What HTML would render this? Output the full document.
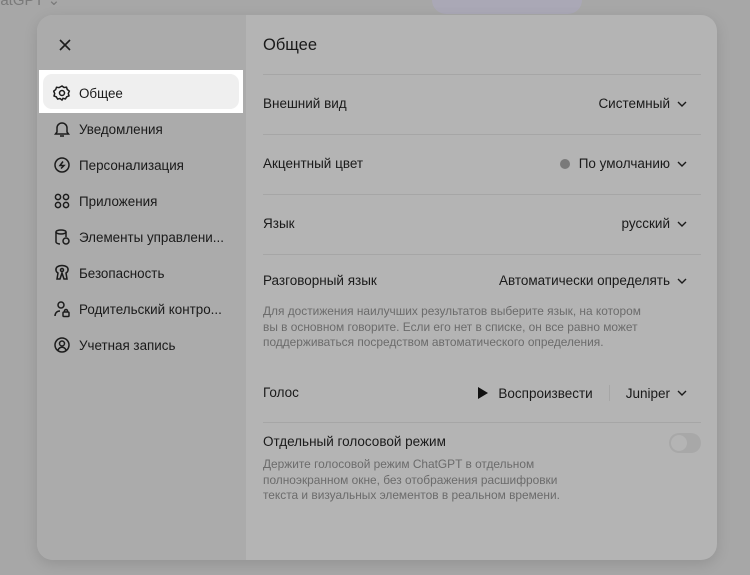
<!DOCTYPE html>
<html><head><meta charset="utf-8"><style>
*{margin:0;padding:0;box-sizing:border-box}
body{width:750px;height:575px;overflow:hidden;background:#a7a7a7;font-family:"Liberation Sans","Noto Sans CJK SC",sans-serif;color:#1a1a1a;position:relative}
.top{position:absolute;left:-8px;top:-9px;font-size:15px;color:#7a7a7a}
.plus{position:absolute;left:432px;top:-14px;width:150px;height:28px;border-radius:14px;background:#aaa8b6}
.modal{position:absolute;left:37px;top:15px;width:680px;height:545px;border-radius:16px;background:#b4b4b4;overflow:hidden;box-shadow:0 4px 14px rgba(0,0,0,.12)}
.side{position:absolute;left:0;top:0;width:209px;height:100%;background:#ababab}
.x{position:absolute;left:20px;top:22px}
.item{position:absolute;left:16px;height:20px;display:flex;align-items:center;font-size:13.4px}
.item svg{margin-right:8px}
.hl{position:absolute;left:2px;top:55px;width:204px;height:43px;background:#fff}
.hl .p{position:absolute;left:4px;top:4px;width:196px;height:35px;border-radius:9px;background:#efefef}
.main{position:absolute;left:226px;top:0;right:16px}
h1{position:absolute;left:0;top:21px;font-size:16.5px;font-weight:normal}
.line{position:absolute;left:0;right:0;height:1px;background:#a6a6a6}
.row{position:absolute;left:0;right:0;font-size:13.5px}
.r{position:absolute;right:14px;display:flex;align-items:center}
.chev{margin-left:7px}
.desc{position:absolute;left:0;font-size:11.9px;color:#6b6b6b;line-height:15.5px}
</style></head><body>
<div class="top">hatGPT ⌄</div>
<div class="plus"></div>
<div class="modal">
<div class="side"></div>
<svg class="x" width="16" height="16" viewBox="0 0 16 16"><path d="M3 3L13 13M13 3L3 13" stroke="#1c1c1c" stroke-width="1.6"/></svg>
<div class="hl"><div class="p"></div></div>
<div class="item" style="top:68px"><svg width="18" height="18" viewBox="0 0 18 18" fill="none" stroke="#1c1c1c" stroke-width="1.5"><path d="M9 2l2 1.5 2.5-.3.8 2.3 2 1.6-1 2.4.7 2.3-2.3 1-1.3 2.1-2.4-.5L9 16l-2-1.5-2.4.5-1.3-2.1-2.3-1 .7-2.3-1-2.4 2-1.6.8-2.3 2.5.3z"/><circle cx="9" cy="9" r="2.5"/></svg>Общее</div>
<div class="item" style="top:104px"><svg width="18" height="18" viewBox="0 0 18 18" fill="none" stroke="#1c1c1c" stroke-width="1.5"><path d="M4 12V8a5 5 0 0110 0v4l1.5 2h-13z"/><path d="M7 16h4"/></svg>Уведомления</div>
<div class="item" style="top:140px"><svg width="18" height="18" viewBox="0 0 18 18" fill="none" stroke="#1c1c1c" stroke-width="1.5"><circle cx="9" cy="9" r="7"/><path d="M10 5.5L7 9.5h4l-3 3"/></svg>Персонализация</div>
<div class="item" style="top:176px"><svg width="18" height="18" viewBox="0 0 18 18" fill="none" stroke="#1c1c1c" stroke-width="1.5"><circle cx="5" cy="5" r="2.6"/><circle cx="13" cy="5" r="2.6"/><circle cx="5" cy="13" r="2.6"/><circle cx="13" cy="13" r="2.6"/></svg>Приложения</div>
<div class="item" style="top:212px"><svg width="18" height="18" viewBox="0 0 18 18" fill="none" stroke="#1c1c1c" stroke-width="1.5"><ellipse cx="8" cy="4" rx="5" ry="2"/><path d="M3 4v10c0 1 2 2 4 2M13 4v5"/><circle cx="13" cy="13" r="3"/></svg>Элементы управлени...</div>
<div class="item" style="top:248px"><svg width="18" height="18" viewBox="0 0 18 18" fill="none" stroke="#1c1c1c" stroke-width="1.5"><path d="M4 3c3-2 7-2 10 0 2 2 1 5-1 6l1 6h-3L9 9 7 15H4l1-6C3 8 2 5 4 3z"/><circle cx="9" cy="6" r="1.5"/></svg>Безопасность</div>
<div class="item" style="top:284px"><svg width="18" height="18" viewBox="0 0 18 18" fill="none" stroke="#1c1c1c" stroke-width="1.5"><circle cx="8" cy="5" r="3"/><path d="M2 16c0-3 2-5 5-5"/><rect x="10" y="12" width="6" height="4.5" rx="1"/><path d="M11.5 12v-1a1.5 1.5 0 013 0v1"/></svg>Родительский контро...</div>
<div class="item" style="top:320px"><svg width="18" height="18" viewBox="0 0 18 18" fill="none" stroke="#1c1c1c" stroke-width="1.5"><circle cx="9" cy="9" r="7"/><circle cx="9" cy="7.5" r="2.5"/><path d="M5 14c1-2 2.5-2.7 4-2.7s3 .7 4 2.7"/></svg>Учетная запись</div>

<div class="main">
<h1>Общее</h1>
<div class="line" style="top:59px"></div>
<div class="row" style="top:81px">Внешний вид<div class="r" style="top:0">Системный<svg class="chev" width="10" height="8" viewBox="0 0 10 8"><path d="M1 2l4 4 4-4" fill="none" stroke="#1c1c1c" stroke-width="1.4"/></svg></div></div>
<div class="line" style="top:119px"></div>
<div class="row" style="top:141px">Акцентный цвет<div class="r" style="top:0"><span style="width:10px;height:10px;border-radius:5px;background:#7a7a7a;margin-right:9px"></span>По умолчанию<svg class="chev" width="10" height="8" viewBox="0 0 10 8"><path d="M1 2l4 4 4-4" fill="none" stroke="#1c1c1c" stroke-width="1.4"/></svg></div></div>
<div class="line" style="top:179px"></div>
<div class="row" style="top:201px">Язык<div class="r" style="top:0">русский<svg class="chev" width="10" height="8" viewBox="0 0 10 8"><path d="M1 2l4 4 4-4" fill="none" stroke="#1c1c1c" stroke-width="1.4"/></svg></div></div>
<div class="line" style="top:239px"></div>
<div class="row" style="top:258px">Разговорный язык<div class="r" style="top:0">Автоматически определять<svg class="chev" width="10" height="8" viewBox="0 0 10 8"><path d="M1 2l4 4 4-4" fill="none" stroke="#1c1c1c" stroke-width="1.4"/></svg></div></div>
<div class="desc" style="top:289px">Для достижения наилучших результатов выберите язык, на котором<br>вы в основном говорите. Если его нет в списке, он все равно может<br>поддерживаться посредством автоматического определения.</div>
<div class="row" style="top:370px">Голос<div class="r" style="top:0"><svg width="12" height="12" viewBox="0 0 12 12" style="margin-right:9px"><path d="M1 0l10 6-10 6z" fill="#111"/></svg>Воспроизвести<span style="width:1px;height:16px;background:#a6a6a6;margin:0 16px"></span>Juniper<svg class="chev" width="10" height="8" viewBox="0 0 10 8"><path d="M1 2l4 4 4-4" fill="none" stroke="#1c1c1c" stroke-width="1.4"/></svg></div></div>
<div class="line" style="top:407px"></div>
<div class="row" style="top:419px">Отдельный голосовой режим<div class="r" style="top:-1px;right:0;width:32px;height:20px;border-radius:10px;background:#a8a8a8"><span style="position:absolute;left:2px;top:2px;width:16px;height:16px;border-radius:8px;background:#b4b4b4"></span></div></div>
<div class="desc" style="top:442px">Держите голосовой режим ChatGPT в отдельном<br>полноэкранном окне, без отображения расшифровки<br>текста и визуальных элементов в реальном времени.</div>
</div>
</div>
</body></html>
